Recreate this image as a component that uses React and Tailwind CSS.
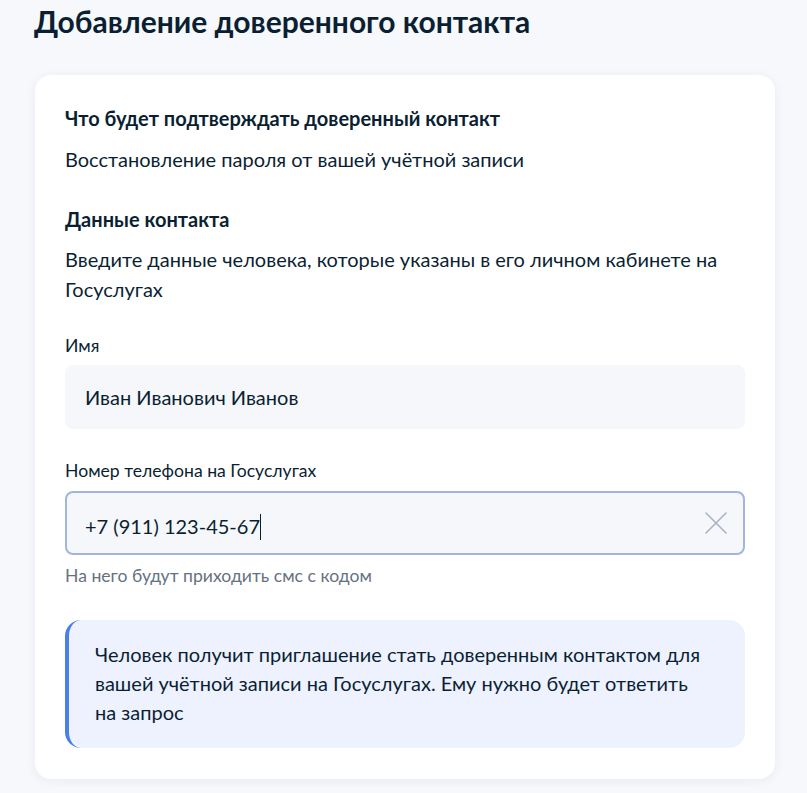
function ClearIcon() {
  return (
    <svg width="22" height="22" viewBox="0 0 22 22" fill="none" stroke="#a9b3c3" strokeWidth="1.6" strokeLinecap="round">
      <path d="M1 1L21 21M21 1L1 21" />
    </svg>
  )
}

function Field({ label, value, focused, children }) {
  return (
    <div>
      <div className="text-[17.6px] leading-[24px] text-[#0b1f33]">{label}</div>
      <div
        className={
          'flex h-[64px] items-center rounded-lg bg-[#f5f7fa] ' +
          (focused ? 'mt-2 border-2 border-[#a3b5dd] pr-4 pl-[18px]' : 'mt-[7px] px-5')
        }
      >
        <span className="flex-1 text-[20px] leading-[24px] text-[#0b1f33]">
          {value}
          {focused && <span className="inline-block h-[26px] w-px translate-y-[6px] bg-[#0b1f33]" />}
        </span>
        {children}
      </div>
    </div>
  )
}

export default function App() {
  return (
    <div className="min-h-screen bg-[#f6f8fc] px-[34px] pt-[3px] font-['Lato','Liberation_Sans',sans-serif] text-[#0b1f33]">
      <h1 className="text-[30px] font-bold leading-[36px]">Добавление доверенного контакта</h1>

      <section className="mt-9 ml-px w-[740px] rounded-2xl bg-white px-[30px] pt-[30px] pb-[31px] shadow-[0_2px_12px_rgba(11,31,51,0.06)]">
        <h2 className="text-[20px] font-bold leading-[26px]">Что будет подтверждать доверенный контакт</h2>
        <p className="mt-[13px] text-[20px] leading-[30px]">Восстановление пароля от вашей учётной записи</p>

        <h2 className="mt-8 text-[20px] font-bold leading-[26px]">Данные контакта</h2>
        <p className="mt-[12px] text-[20px] leading-[30px]">
          Введите данные человека, которые указаны в его личном кабинете на Госуслугах
        </p>

        <div className="mt-[30px]">
          <Field label="Имя" value="Иван Иванович Иванов" />
        </div>

        <div className="mt-[30px]">
          <Field label="Номер телефона на Госуслугах" value="+7 (911) 123-45-67" focused>
            <ClearIcon />
          </Field>
          <p className="mt-[9px] text-[17.6px] leading-[24px] text-[#66727f]">На него будут приходить смс с кодом</p>
        </div>

        <div className="mt-[32px] rounded-2xl border-l-4 border-[#4a7fe8] bg-[#edf2fe] pt-5 pr-10 pb-[21px] pl-[26px]">
          <p className="text-[20px] leading-[29px]">
            Человек получит приглашение стать доверенным контактом для вашей учётной записи на Госуслугах. Ему
            нужно будет ответить на запрос
          </p>
        </div>
      </section>
    </div>
  )
}
